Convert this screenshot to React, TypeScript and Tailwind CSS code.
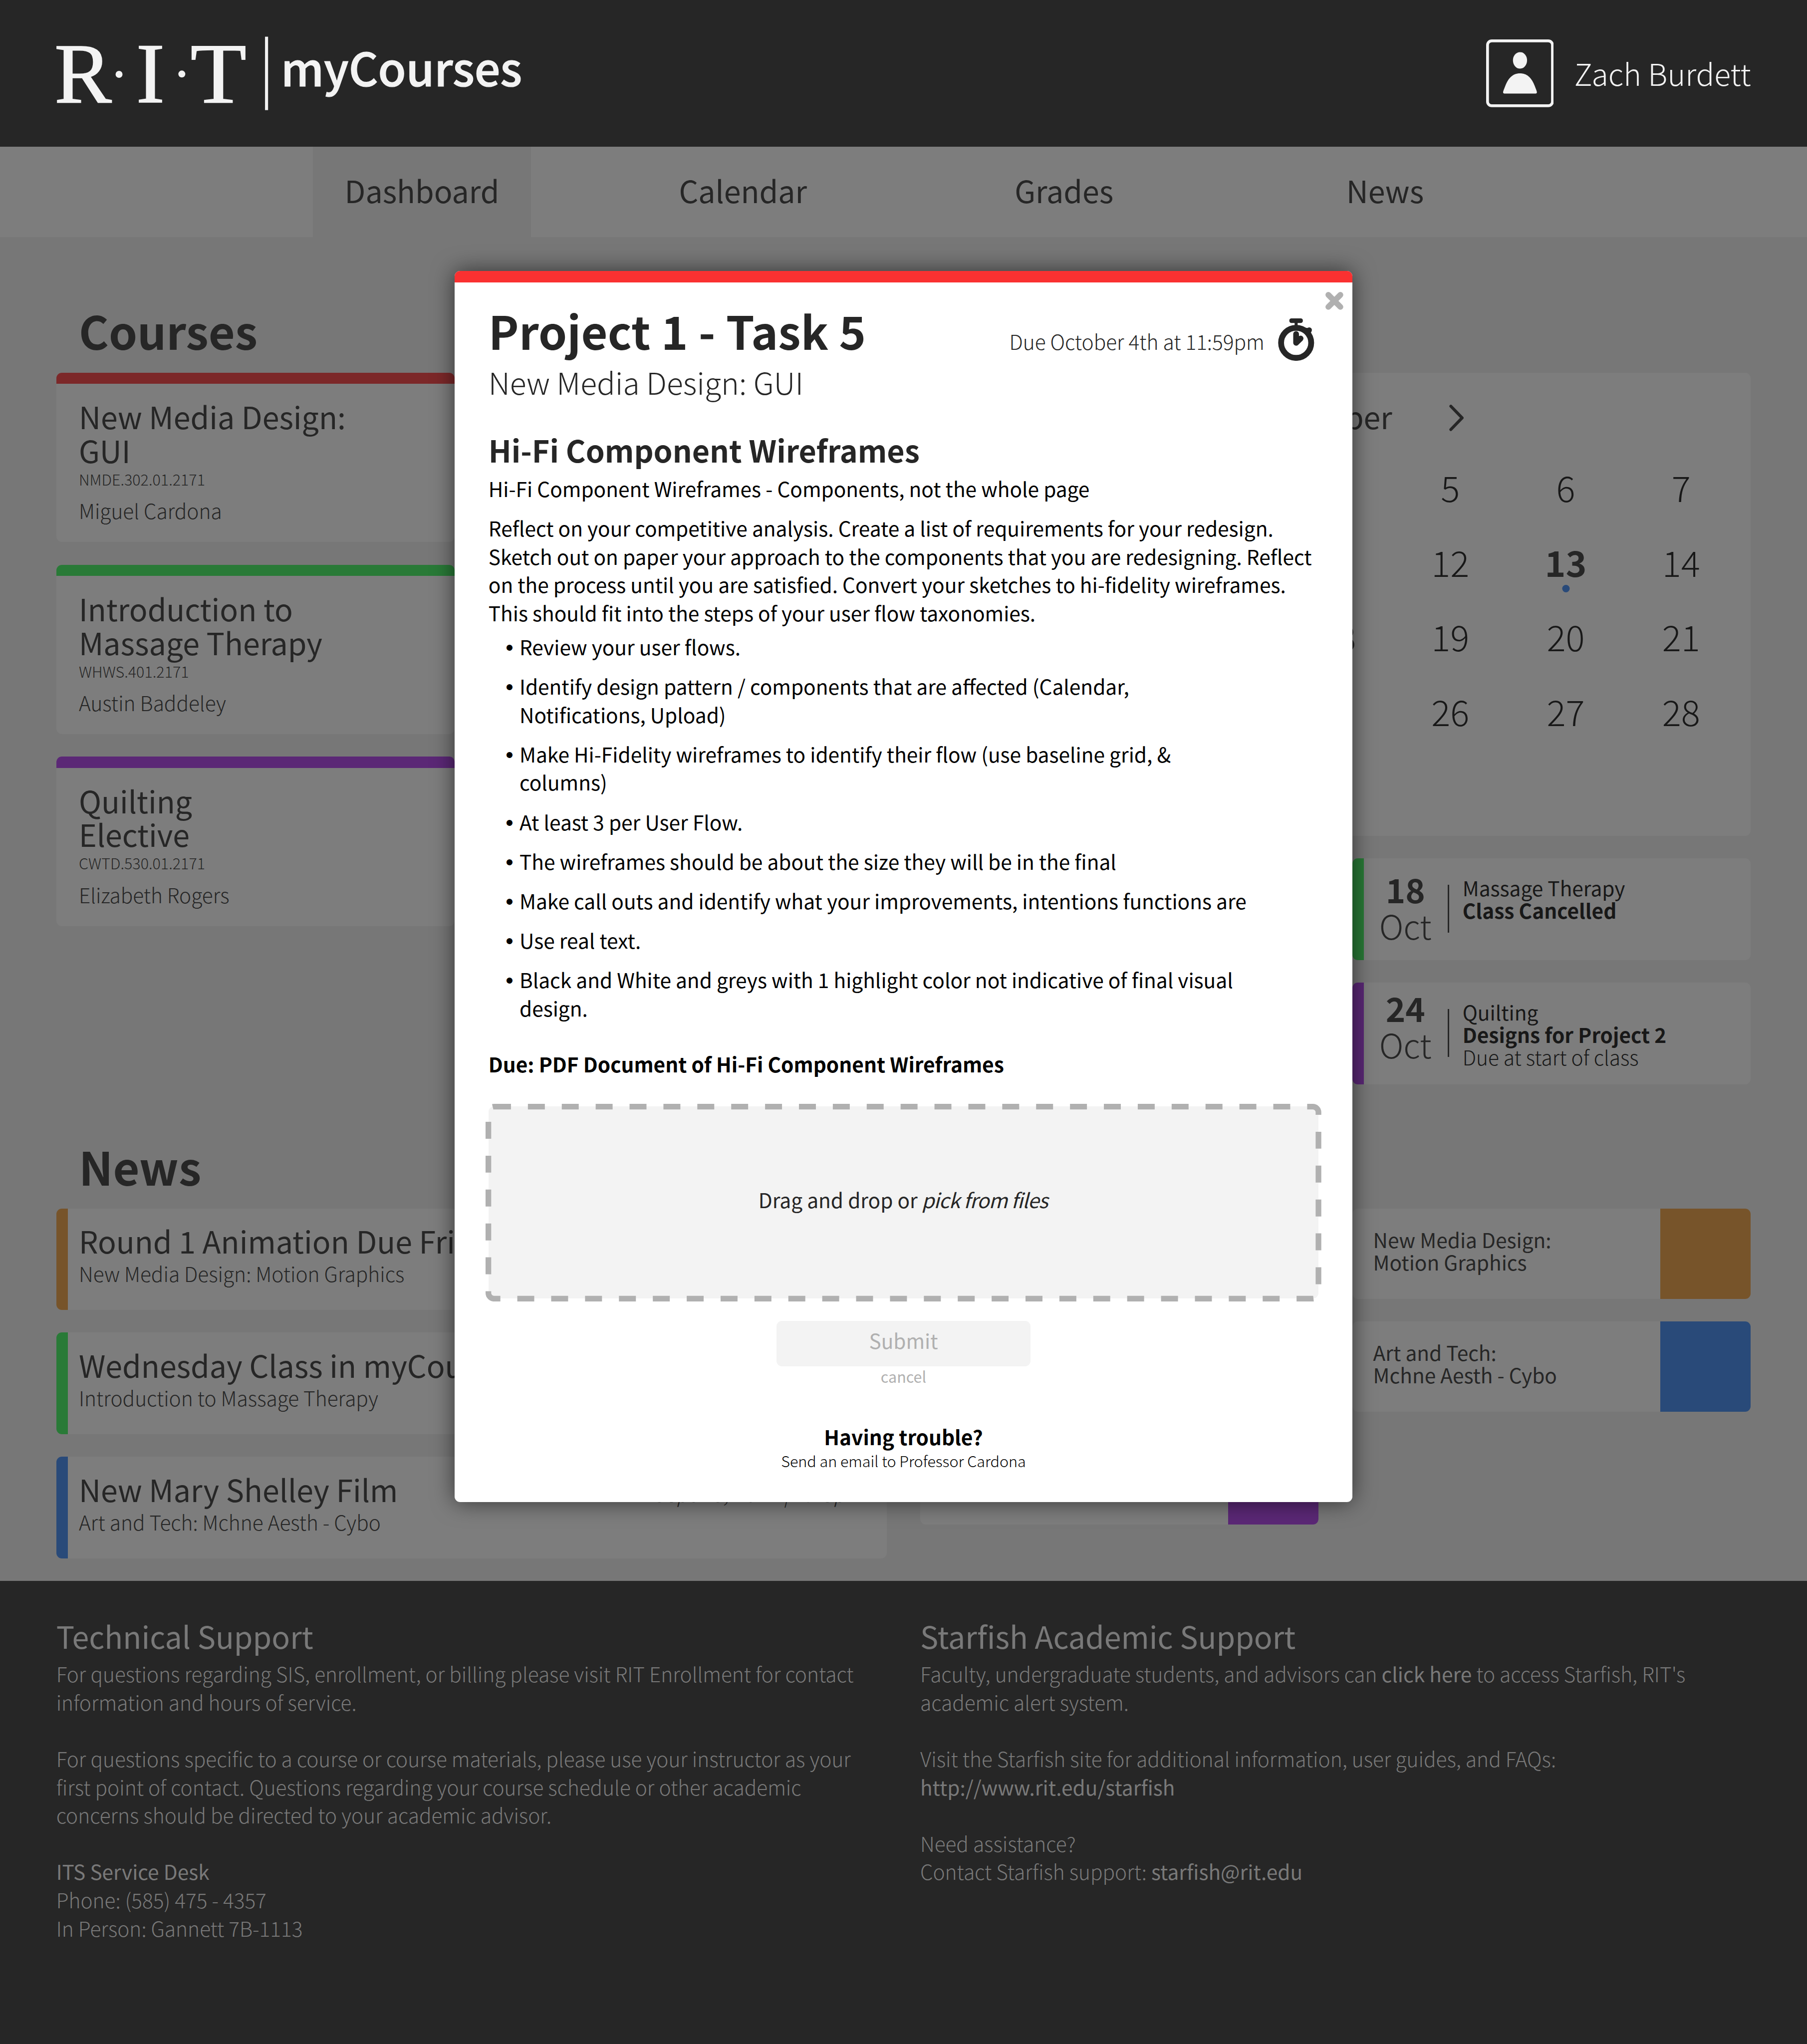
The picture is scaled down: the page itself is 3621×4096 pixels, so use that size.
import React from "react";

type Course = { name: string; code: string; teacher: string; bar: string };

const courses: Course[] = [
  { name: "New Media Design:\nGUI", code: "NMDE.302.01.2171", teacher: "Miguel Cardona", bar: "bg-[#7c2829]" },
  { name: "Introduction to\nMassage Therapy", code: "WHWS.401.2171", teacher: "Austin Baddeley", bar: "bg-[#297a37]" },
  { name: "Quilting\nElective", code: "CWTD.530.01.2171", teacher: "Elizabeth Rogers", bar: "bg-[#5b2876]" },
];

const news = [
  { title: "Round 1 Animation Due Friday", course: "New Media Design: Motion Graphics", date: "", bar: "bg-[#77542a]" },
  { title: "Wednesday Class in myCourses", course: "Introduction to Massage Therapy", date: "", bar: "bg-[#297a37]" },
  { title: "New Mary Shelley Film", course: "Art and Tech: Mchne Aesth - Cybo", date: "Sept 28, 2017 | 1:23pm", bar: "bg-[#294a79]" },
];

const sharedLeft = [
  { name: "New Media Design:\nGUI", color: "bg-[#7c2829]" },
  { name: "Introduction to\nMassage Therapy", color: "bg-[#297a37]" },
  { name: "Quilting\nElective", color: "bg-[#5b2876]" },
];

const sharedRight = [
  { name: "New Media Design:\nMotion Graphics", color: "bg-[#77542a]" },
  { name: "Art and Tech:\nMchne Aesth - Cybo", color: "bg-[#294a79]" },
];

const steps = [
  "Review your user flows.",
  "Identify design pattern / components that are affected (Calendar,\nNotifications, Upload)",
  "Make Hi-Fidelity wireframes to identify their flow (use baseline grid, &\ncolumns)",
  "At least 3 per User Flow.",
  "The wireframes should be about the size they will be in the final",
  "Make call outs and identify what your improvements, intentions functions are",
  "Use real text.",
  "Black and White and greys with 1 highlight color not indicative of final visual\ndesign.",
];

const days = Array.from({ length: 31 }, (_, i) => i + 1);

function Logo() {
  return (
    <svg className="ml-100 h-312 w-472 shrink-0" viewBox="100 0 472 312" fill="#f3f3f3">
      <g fontFamily="'Liberation Serif', serif" fontSize="182.5" stroke="#f3f3f3" strokeWidth="1.8">
        <text x="116" y="217.3">R</text>
        <text x="289.500" y="217.3">I</text>
        <text transform="translate(405 217.300) scale(1.07 1)">T</text>
      </g>
      <circle cx="253.300" cy="158" r="7.400" />
      <circle cx="386.700" cy="157.300" r="7.400" />
      <rect x="563.500" y="78" width="6.500" height="156" />
    </svg>
  );
}

function Header() {
  return (
    <header className="flex h-312 items-start bg-[#262626] text-[#f3f3f3]">
      <Logo />
      <span className="ml-25 text-2xl leading-284 font-medium tracking-[-0.1px] [-webkit-text-stroke:1.2px_#f3f3f3]">myCourses</span>
      <svg className="ml-auto mt-84 h-144 w-144 shrink-0" viewBox="0 0 144 144">
        <rect x="3" y="3" width="138" height="138" rx="9" fill="none" stroke="#f3f3f3" strokeWidth="6" />
        <ellipse cx="72" cy="44.500" rx="15" ry="17.500" fill="#f3f3f3" />
        <path d="M72 72C88 72 97 83 103 98C105.500 104.500 108 110 108 112.500Q108 115 105.500 115H38.500Q36 115 36 112.500C36 110 38.500 104.500 41 98C47 83 56 72 72 72Z" fill="#f3f3f3" />
      </svg>
      <span className="ml-43.5 mr-119 text-xl leading-310 font-light">Zach Burdett</span>
    </header>
  );
}

function Nav() {
  return (
    <nav className="flex h-192 justify-center gap-219.25 bg-[#7d7d7d] text-xl leading-184 text-[#262626]">
      <span className="w-463 bg-[#777777] text-center">Dashboard</span>
      <span className="w-463 text-center">Calendar</span>
      <span className="w-463 text-center">Grades</span>
      <span className="w-463 text-center">News</span>
    </nav>
  );
}

function CourseCard({ name, code, teacher, bar }: Course) {
  return (
    <article className="h-360 overflow-hidden rounded-[11px] bg-[#7d7d7d]">
      <div className={`h-24 ${bar}`} />
      <div className="pl-47.5 pt-32.5">
        <h3 className="text-xl leading-72 whitespace-pre-line">{name}</h3>
        <p className="mt-8.5 text-sm leading-36 font-light">{code}</p>
        <p className="mt-24 text-base leading-48 font-light">{teacher}</p>
      </div>
    </article>
  );
}

function Calendar() {
  return (
    <section className="h-984 rounded-[11px] bg-[#7d7d7d] pl-23 pr-25 pt-56">
      <div className="flex justify-center">
        <svg className="mt-12 h-56 w-31" viewBox="0 0 31 56" fill="none" stroke="#262626" strokeWidth="6.300" strokeLinecap="round" strokeLinejoin="round">
          <path d="M27.500 3.200L3.500 28L27.500 52.800" />
        </svg>
        <span className="w-486 text-center text-xl leading-72">October</span>
        <svg className="mt-12 h-56 w-31" viewBox="0 0 31 56" fill="none" stroke="#262626" strokeWidth="6.300" strokeLinecap="round" strokeLinejoin="round">
          <path d="M3.500 3.200L27.500 28L3.500 52.800" />
        </svg>
      </div>
      <div className="mt-36 grid grid-cols-7 text-center text-[71.1px] leading-158.5 font-light text-[#181818]">
        {days.map((d) => (
          <div key={d} className="relative h-158.5">
            {d === 13 || d === 18 ? <span className="font-bold text-[#262626]">{d}</span> : d}
            {d === 13 && <span className="absolute left-1/2 top-128 size-16 -translate-x-1/2 rounded-full bg-[#294a79]" />}
          </div>
        ))}
      </div>
    </section>
  );
}

function AgendaCard({ day, bar, dayTop, children }: { day: string; bar: string; dayTop: string; children: React.ReactNode }) {
  return (
    <article className="flex h-216 overflow-hidden rounded-[11px] bg-[#7d7d7d]">
      <div className={`w-24 ${bar}`} />
      <div className={`w-177 text-center text-[67px] leading-77.5 ${dayTop}`}>
        <div className="font-bold">{day}</div>
        <div className="font-light">Oct</div>
      </div>
      <div className="ml-1 mt-56 h-102 w-4 bg-[#262626]" />
      <div className="pl-28 pt-38 text-base leading-48 text-[#181818]">{children}</div>
    </article>
  );
}

function NewsCard({ title, course, date, bar }: { title: string; course: string; date: string; bar: string }) {
  return (
    <article className="flex h-216 overflow-hidden rounded-[11px] bg-[#7d7d7d]">
      <div className={`w-24 shrink-0 ${bar}`} />
      <div className="flex-1 pl-23.5 pr-46 pt-32">
        <div className="flex items-baseline justify-between">
          <h3 className="text-xl leading-72">{title}</h3>
          <span className="text-base leading-48 font-light tracking-[0.8px] italic">{date}</span>
        </div>
        <p className="mt-10 text-base leading-48 font-light">{course}</p>
      </div>
    </article>
  );
}

function SharedCard({ name, color }: { name: string; color: string }) {
  return (
    <article className="flex h-192 justify-between overflow-hidden rounded-[11px] bg-[#7d7d7d]">
      <p className="pl-44 pt-41.5 text-base leading-48 whitespace-pre-line">{name}</p>
      <div className={`w-192 ${color}`} />
    </article>
  );
}

function Footer() {
  return (
    <footer className="flex h-984 bg-[#262626] pl-119.5 pt-80 text-base leading-60 font-light text-[#797979]">
      <div className="w-1836">
        <h2 className="mb-15.5 text-xl leading-72 font-normal">Technical Support</h2>
        <p>
          For questions regarding SIS, enrollment, or billing please visit RIT Enrollment for contact
          <br />
          information and hours of service.
        </p>
        <p className="mt-60">
          For questions specific to a course or course materials, please use your instructor as your
          <br />
          first point of contact. Questions regarding your course schedule or other academic
          <br />
          concerns should be directed to your academic advisor.
        </p>
        <p className="mt-60 font-normal">ITS Service Desk</p>
        <p>Phone: (585) 475 - 4357</p>
        <p>In Person: Gannett 7B-1113</p>
      </div>
      <div>
        <h2 className="mb-15.5 text-xl leading-72 font-normal">Starfish Academic Support</h2>
        <p>
          Faculty, undergraduate students, and advisors can <a className="font-normal">click here</a> to access Starfish, RIT's
          <br />
          academic alert system.
        </p>
        <p className="mt-60">
          Visit the Starfish site for additional information, user guides, and FAQs:
          <br />
          <a className="font-normal">http://www.rit.edu/starfish</a>
        </p>
        <p className="mt-60">
          Need assistance?
          <br />
          Contact Starfish support: <a className="font-normal">starfish@rit.edu</a>
        </p>
      </div>
    </footer>
  );
}

function Stopwatch() {
  return (
    <svg className="ml-29 mt-29 h-90 w-77 self-start" viewBox="0 0 77 90" fill="#262626">
      <rect x="24" y="0" width="28.800" height="9.700" rx="4.500" />
      <rect x="35.300" y="8" width="6.400" height="9" />
      <circle cx="38.500" cy="52" r="32" fill="none" stroke="#262626" strokeWidth="12.400" />
      <path d="M58 20L62.500 20.500L71.500 27.500L68 33Z" />
      <circle cx="66.300" cy="24.700" r="5.700" />
      <path d="M38.400 33.200V52L48 42.700" fill="none" stroke="#262626" strokeWidth="12.200" strokeLinecap="round" strokeLinejoin="round" />
    </svg>
  );
}

function UploadDialog() {
  return (
    <div role="dialog" className="absolute left-966 top-576 h-2616 w-1908 rounded-[11px] bg-white text-base leading-60 text-black shadow-[0_0_45px_rgba(0,0,0,0.58)]">
      <div className="h-24 rounded-t-[11px] bg-[#fa3131]" />
      <svg className="absolute left-1851 top-44.5 size-38" viewBox="0 0 38 38" stroke="#b0b0b0" strokeWidth="12.300" strokeLinecap="round">
        <path d="M6.200 6.200L31.800 31.800M31.800 6.200L6.200 31.800" />
      </svg>
      <div className="pl-72 pt-47.5">
        <div className="flex h-108 items-baseline pr-81 text-[#262626]">
          <h1 className="text-2xl leading-108 font-bold tracking-[0.2px]">Project 1 - Task 5</h1>
          <span className="ml-auto font-light">Due October 4th at 11:59pm</span>
          <Stopwatch />
        </div>
        <p className="mt-20 text-xl leading-72 font-light text-[#262626]">New Media Design: GUI</p>
        <h2 className="mt-72 text-xl leading-72 font-bold text-[#262626]">Hi-Fi Component Wireframes</h2>
        <p className="mt-17.5">Hi-Fi Component Wireframes - Components, not the whole page</p>
        <p className="mt-23.5">
          Reflect on your competitive analysis. Create a list of requirements for your redesign.
          <br />
          Sketch out on paper your approach to the components that you are redesigning. Reflect
          <br />
          on the process until you are satisfied. Convert your sketches to hi-fidelity wireframes.
          <br />
          This should fit into the steps of your user flow taxonomies.
        </p>
        <ul className="mt-12 flex flex-col gap-24 pl-36.5">
          {steps.map((s) => (
            <li key={s} className="flex items-baseline">
              <span className="w-29.5 shrink-0 font-['Liberation_Sans',sans-serif] text-[44px] leading-30">•</span>
              <span className="whitespace-pre-line">{s}</span>
            </li>
          ))}
        </ul>
        <p className="mt-59 font-bold">Due: PDF Document of Hi-Fi Component Wireframes</p>
      </div>
      <div className="relative mx-72 mt-60 h-408 rounded-[11px] bg-[#f3f3f3] pt-168 text-center text-[#262626]">
        <svg className="absolute -left-6 -top-6 h-420 w-1776" viewBox="-6 -6 1776 420" fill="none">
          <rect width="1764" height="408" rx="12" stroke="#b0b0b0" strokeWidth="12" strokeDasharray="36 36" />
        </svg>
        Drag and drop or <em className="-ml-1 mr-2 tracking-[-0.9px]">pick from files</em>
      </div>
      <div className="mt-48 flex flex-col items-center">
        <button className="h-96 w-540 rounded-[11px] bg-[#f3f3f3] pb-14 text-base leading-82 text-[#b0b0b0]">Submit</button>
        <span className="mt-4 text-sm leading-36 text-[#b0b0b0]">cancel</span>
        <h4 className="mt-80 font-bold">Having trouble?</h4>
        <p className="mt-4 text-sm leading-36 font-light">Send an email to Professor Cardona</p>
      </div>
    </div>
  );
}

/* One spacing step is one unit of the 3840-wide design grid. */
export default function App() {
  return (
    <div className="relative h-4344 w-3840 overflow-hidden bg-[#777777] font-['Noto_Sans_CJK_SC',sans-serif] text-[#262626] [--spacing:0.94297px] [--text-2xl:91.4px] [--text-base:40.62px] [--text-sm:30.47px] [--text-xl:60.85px]">
      <Header />
      <Nav />
      <main className="h-2856 px-120 pt-144">
        <section className="flex h-1776 justify-between">
          <div className="w-846">
            <h2 className="mb-36 pl-47.5 text-2xl leading-108 font-bold">Courses</h2>
            <div className="flex flex-col gap-48">
              {courses.map((c) => (
                <CourseCard key={c.code} {...c} />
              ))}
            </div>
          </div>
          <div className="flex w-1764 flex-col gap-48 pt-144">
            <Calendar />
            <div className="flex w-846 flex-col gap-48 self-end">
              <AgendaCard day="18" bar="bg-[#297a37]" dayTop="pt-25">
                <p>Massage Therapy</p>
                <p className="font-bold">Class Cancelled</p>
              </AgendaCard>
              <AgendaCard day="24" bar="bg-[#5b2876]" dayTop="pt-13.5">
                <p>Quilting</p>
                <p className="font-bold">Designs for Project 2</p>
                <p className="font-light">Due at start of class</p>
              </AgendaCard>
            </div>
          </div>
        </section>
        <section className="flex items-start">
          <div className="w-1764">
            <h2 className="mb-36 pl-47.5 text-2xl leading-108 font-bold">News</h2>
            <div className="flex flex-col gap-48">
              {news.map((n) => (
                <NewsCard key={n.title} {...n} />
              ))}
            </div>
          </div>
          <div className="ml-72 flex w-846 flex-col gap-48 pt-144">
            {sharedLeft.map((s) => (
              <SharedCard key={s.name} {...s} />
            ))}
          </div>
          <div className="ml-72 flex w-846 flex-col gap-48 pt-144">
            {sharedRight.map((s) => (
              <SharedCard key={s.name} {...s} />
            ))}
          </div>
        </section>
      </main>
      <Footer />
      <UploadDialog />
    </div>
  );
}
